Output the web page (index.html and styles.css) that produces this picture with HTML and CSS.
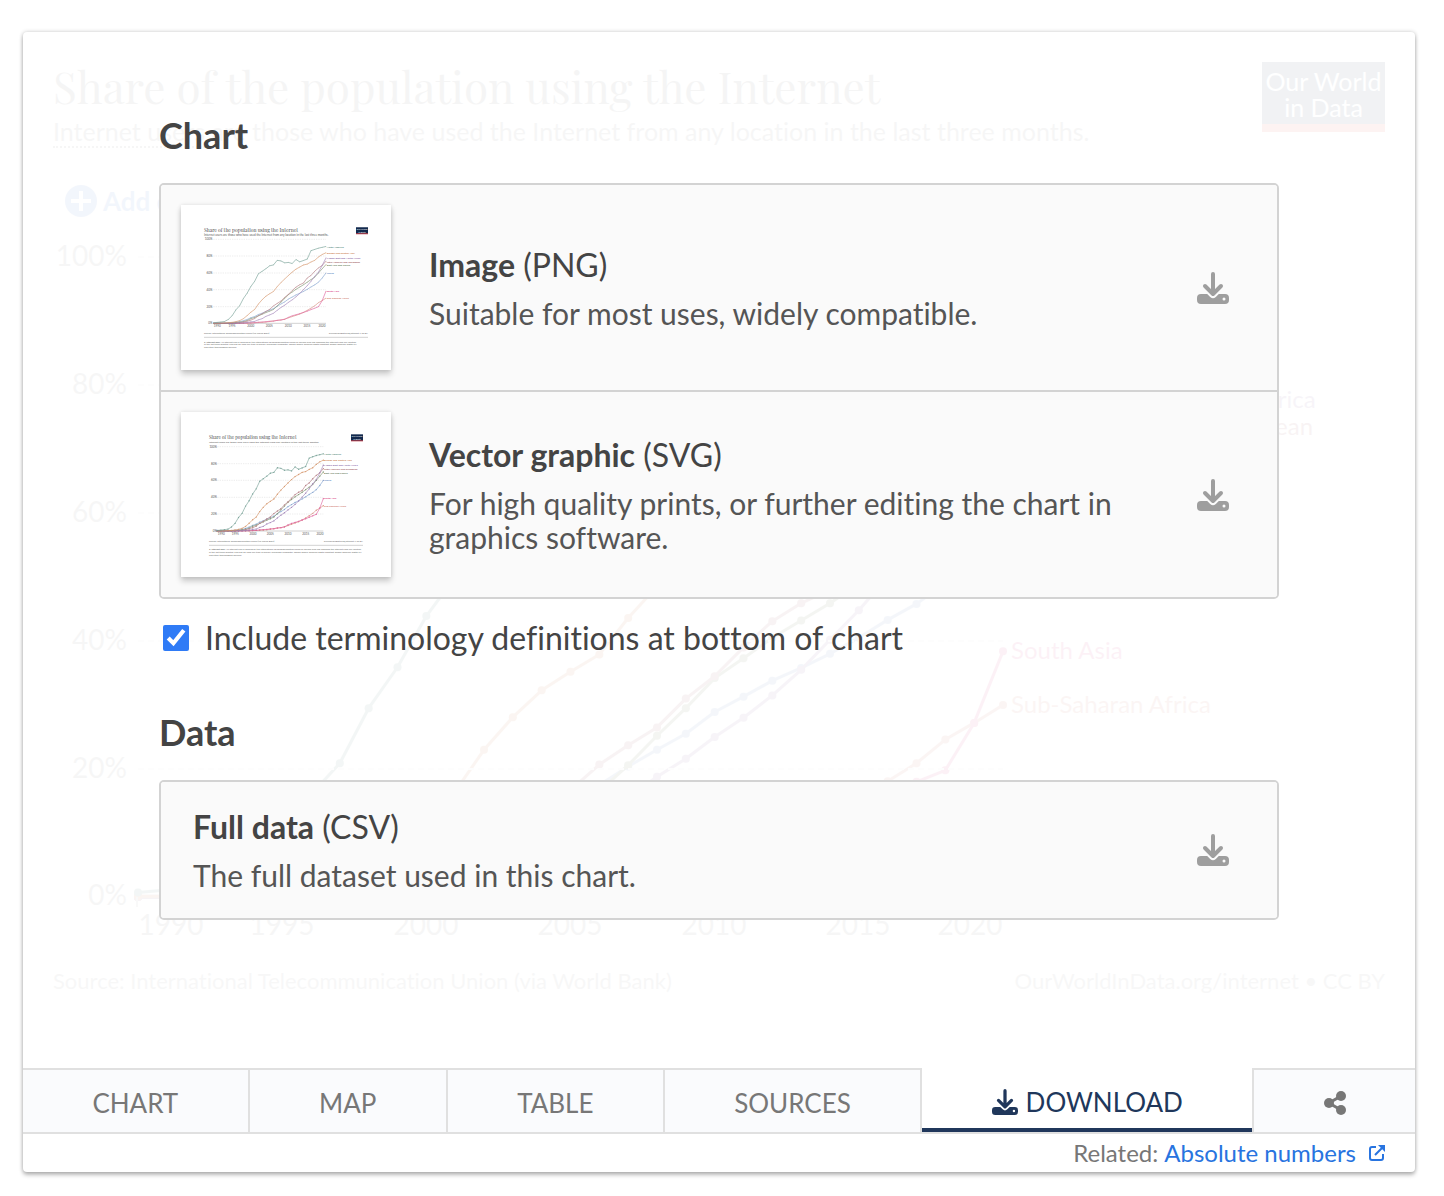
FILE: index.html
```html
<!DOCTYPE html>
<html lang="en">
<head>
<meta charset="utf-8">
<meta name="viewport" content="width=device-width, initial-scale=1">
<title>Share of the population using the Internet</title>
<link rel="stylesheet" href="styles.css">
<script src="chart.js" defer></script>
</head>
<body>
<svg class="defs" aria-hidden="true">
  <symbol id="icon-download" viewBox="0 0 32 32">
    <path d="M16 2V20M8 14l8 8 8-8" fill="none" stroke="currentColor" stroke-width="4" stroke-linecap="round" stroke-linejoin="round"/>
    <path fill="currentColor" fill-rule="evenodd" d="M4 22h6.200l3 3a4 4 0 0 0 5.600 0l3-3H28a4 4 0 0 1 4 4v2a4 4 0 0 1-4 4H4a4 4 0 0 1-4-4v-2a4 4 0 0 1 4-4zM27 25.500a1.500 1.500 0 1 0 0 3 1.500 1.500 0 0 0 0-3z"/>
  </symbol>
</svg>

<main class="grapher">
  <div class="stage">
    <div class="backdrop" aria-hidden="true">
      <header class="chart-header">
        <div>
          <h1 class="chart-title">Share of the population using the Internet</h1>
          <p class="chart-subtitle"><span class="term">Internet users</span> are those who have used the Internet from any location in the last three months.</p>
        </div>
        <div class="logo">Our World<br>in Data</div>
      </header>
      <div class="add-country">
        <svg class="plus" viewBox="0 0 32 32"><circle cx="16" cy="16" r="16" fill="currentColor"/><path d="M16 6v20M6 16h20" stroke="#fff" stroke-width="4"/></svg>
        <span>Add country</span>
      </div>
      <svg class="plot" viewBox="0 0 1332 735">
        <g class="series" data-x="85" data-y="679" data-width="865" data-height="640" data-radius="4"></g>
        <path class="grid" d="M85 39H950M85 167H950M85 295H950M85 423H950M85 551H950"/>
        <path class="tick" d="M84 679v10"/>
        <g class="axis-label axis-y">
          <text x="74" y="48">100%</text><text x="74" y="176">80%</text><text x="74" y="304">60%</text><text x="74" y="432">40%</text><text x="74" y="560">20%</text><text x="74" y="687">0%</text>
        </g>
        <g class="axis-label axis-x">
          <text x="118" y="717">1990</text><text x="229" y="717">1995</text><text x="373" y="717">2000</text><text x="517" y="717">2005</text><text x="661" y="717">2010</text><text x="805" y="717">2015</text><text x="917" y="717">2020</text>
        </g>
        <g class="series-label">
          <text x="958" y="102" fill="#286b5b">North America</text>
          <text x="958" y="150" fill="#be5915">Europe and Central Asia</text>
          <text x="958" y="190" fill="#6d3e91">Middle East and North Africa</text>
          <text x="958" y="217" fill="#883039">Latin America and Caribbean</text>
          <text x="958" y="244" fill="#38551f">East Asia and Pacific</text>
          <text x="958" y="303" fill="#3a6cb4">World</text>
          <text x="958" y="441" fill="#cf0a66">South Asia</text>
          <text x="958" y="495" fill="#c4523e">Sub-Saharan Africa</text>
        </g>
      </svg>
      <footer class="chart-footer">
        <span>Source: International Telecommunication Union (via World Bank)</span>
        <span>OurWorldInData.org/internet • CC BY</span>
      </footer>
    </div>

    <div class="downloads">
      <section>
        <h2 class="heading">Chart</h2>
        <div class="card-group">
          <button class="card" type="button">
            <svg class="thumb" viewBox="0 0 630 495" aria-hidden="true">
              <text class="t-title" x="69" y="81">Share of the population using the Internet</text>
              <text class="t-sub" x="69" y="94">Internet users are those who have used the Internet from any location in the last three months.</text>
              <path class="t-navy" d="M525 67h36v20h-36z"/><path class="t-red" d="M525 85h36v3h-36z"/>
              <text class="t-logo" x="543" y="75">Our World</text><text class="t-logo" x="543" y="83">in Data</text>
              <path class="t-grid" d="M97 103H435M97 153H435M97 204H435M97 254H435M97 305H435"/>
              <path class="t-rule" d="M97 355H435M69 397H561"/>
              <g class="series thin" data-x="97" data-y="355" data-width="338" data-height="252" data-radius="1"></g>
              <g class="t-axis t-end"><text x="94" y="106">100%</text><text x="94" y="156">80%</text><text x="94" y="207">60%</text><text x="94" y="257">40%</text><text x="94" y="308">20%</text><text x="94" y="358">0%</text></g>
              <g class="t-axis t-mid"><text x="109" y="367">1990</text><text x="153" y="367">1995</text><text x="209" y="367">2000</text><text x="265" y="367">2005</text><text x="322" y="367">2010</text><text x="378" y="367">2015</text><text x="423" y="367">2020</text></g>
              <g class="t-label">
                <text x="437" y="128" fill="#286b5b">North America</text><text x="437" y="147" fill="#be5915">Europe and Central Asia</text><text x="437" y="163" fill="#6d3e91">Middle East and North Africa</text><text x="437" y="173" fill="#883039">Latin America and Caribbean</text><text x="437" y="184" fill="#38551f">East Asia and Pacific</text><text x="437" y="208" fill="#3a6cb4">World</text><text x="437" y="262" fill="#cf0a66">South Asia</text><text x="437" y="283" fill="#c4523e">Sub-Saharan Africa</text>
              </g>
              <text class="t-note" x="69" y="388">Source: International Telecommunication Union (via World Bank)</text>
              <text class="t-note t-end" x="561" y="388">OurWorldInData.org/internet • CC BY</text>
              <text class="t-note" x="69" y="413"><tspan class="t-bold">1. Internet user:</tspan> An internet user is defined by the International Telecommunication Union as anyone who has accessed the internet from any location</text>
              <text class="t-note" x="69" y="421">in the last three months. This can be from any type of device, including a computer, mobile phone, personal digital assistant, games machine, digital TV</text>
              <text class="t-note" x="69" y="430">and other technological devices.</text>
            </svg>
            <span class="card-text"><span class="card-title"><strong>Image</strong> (PNG)</span><span class="card-desc">Suitable for most uses, widely compatible.</span></span>
            <svg class="card-icon" aria-hidden="true"><use href="#icon-download"/></svg>
          </button>
          <button class="card" type="button">
            <svg class="thumb" viewBox="0 0 630 495" aria-hidden="true">
              <text class="t-title t-small" x="84" y="81">Share of the population using the Internet</text>
              <text class="t-sub t-small" x="84" y="94">Internet users are those who have used the internet from any location in the last three months.</text>
              <path class="t-navy" d="M510 67h36v20h-36z"/><path class="t-red" d="M510 85h36v3h-36z"/>
              <text class="t-logo" x="528" y="75">Our World</text><text class="t-logo" x="528" y="83">in Data</text>
              <path class="t-grid" d="M109 104H427M109 155H427M109 205H427M109 256H427M109 306H427"/>
              <path class="t-rule" d="M109 357H427M84 400H546"/>
              <g class="series thin" data-x="109" data-y="357" data-width="318" data-height="253" data-radius="2"></g>
              <g class="t-axis t-end"><text x="108" y="107">100%</text><text x="108" y="158">80%</text><text x="108" y="208">60%</text><text x="108" y="259">40%</text><text x="108" y="309">20%</text><text x="108" y="360">0%</text></g>
              <g class="t-axis t-mid"><text x="121" y="369">1990</text><text x="163" y="369">1995</text><text x="216" y="369">2000</text><text x="268" y="369">2005</text><text x="321" y="369">2010</text><text x="374" y="369">2015</text><text x="417" y="369">2020</text></g>
              <g class="t-label">
                <text x="429" y="129" fill="#286b5b">North America</text><text x="429" y="147" fill="#be5915">Europe and Central Asia</text><text x="429" y="163" fill="#6d3e91">Middle East and North Africa</text><text x="429" y="175" fill="#883039">Latin America and Caribbean</text><text x="429" y="186" fill="#38551f">East Asia and Pacific</text><text x="429" y="207" fill="#3a6cb4">World</text><text x="429" y="262" fill="#cf0a66">South Asia</text><text x="429" y="286" fill="#c4523e">Sub-Saharan Africa</text>
              </g>
              <text class="t-note" x="84" y="390">Source: International Telecommunication Union (via World Bank)</text>
              <text class="t-note t-end" x="546" y="390">OurWorldInData.org/internet • CC BY</text>
              <text class="t-note" x="84" y="414"><tspan class="t-bold">1. Internet user:</tspan> An internet user is defined by the International Telecommunication Union as anyone who has accessed the internet from any location</text>
              <text class="t-note" x="84" y="423">in the last three months. This can be from any type of device, including a computer, mobile phone, personal digital assistant, games machine, digital TV</text>
              <text class="t-note" x="84" y="432">and other technological devices.</text>
            </svg>
            <span class="card-text"><span class="card-title"><strong>Vector graphic</strong> (SVG)</span><span class="card-desc">For high quality prints, or further editing the chart in graphics software.</span></span>
            <svg class="card-icon" aria-hidden="true"><use href="#icon-download"/></svg>
          </button>
        </div>
        <label class="option"><input class="checkbox" type="checkbox" checked><span>Include terminology definitions at bottom of chart</span></label>
      </section>
      <section>
        <h2 class="heading">Data</h2>
        <div class="card-group">
          <button class="card card-plain" type="button">
            <span class="card-text"><span class="card-title"><strong>Full data</strong> (CSV)</span><span class="card-desc">The full dataset used in this chart.</span></span>
            <svg class="card-icon" aria-hidden="true"><use href="#icon-download"/></svg>
          </button>
        </div>
      </section>
    </div>
  </div>

  <nav class="tabs">
    <button class="tab" type="button">CHART</button>
    <button class="tab" type="button">MAP</button>
    <button class="tab" type="button">TABLE</button>
    <button class="tab" type="button">SOURCES</button>
    <button class="tab tab-active" type="button"><svg class="tab-icon" aria-hidden="true"><use href="#icon-download"/></svg>DOWNLOAD</button>
    <button class="tab tab-share" type="button" aria-label="Share">
      <svg class="share-icon" viewBox="0 0 22 24" aria-hidden="true"><path d="M17 5L5 12l12 7" fill="none" stroke="currentColor" stroke-width="3"/><circle cx="5" cy="12" r="5" fill="currentColor"/><circle cx="17" cy="5" r="5" fill="currentColor"/><circle cx="17" cy="19" r="5" fill="currentColor"/></svg>
    </button>
  </nav>
  <div class="related">
    <span>Related:</span>
    <a class="related-link" href="#absolute-numbers">Absolute numbers<svg class="external-icon" viewBox="0 0 18 18" aria-hidden="true"><path d="M8 3H4a2 2 0 0 0-2 2v9a2 2 0 0 0 2 2h9a2 2 0 0 0 2-2v-4M7 11l8-8" fill="none" stroke="currentColor" stroke-width="2"/><path d="M10 1h7v7z" fill="currentColor"/></svg></a>
  </div>
</main>
</body>
</html>
```
FILE: styles.css
```css
*, *::before, *::after { box-sizing: border-box; }

body {
  margin: 0;
  background: #fff;
  font-family: Lato, "Liberation Sans", sans-serif;
  font-variant-ligatures: none;
  color: #444;
}

h1, h2, p { margin: 0; }
button { font: inherit; font-variant-ligatures: none; color: inherit; margin: 0; cursor: pointer; }
.defs { display: none; }

.grapher {
  margin: 32px 29px 24px 23px;
  background: #fff;
  border-radius: 4px;
  box-shadow: 0 0 4px rgba(0, 0, 0, 0.2), 0 3px 4px rgba(0, 0, 0, 0.25);
}

/* The chart and the download panel share one grid cell. */
.stage { display: grid; }
.backdrop, .downloads { grid-area: 1 / 1; min-width: 0; }

.backdrop { padding: 30px; opacity: 0.05; }
.chart-header { display: flex; justify-content: space-between; align-items: flex-start; }
.chart-title {
  font-family: "Playfair Display", "Liberation Serif", serif;
  font-size: 44px;
  line-height: 48px;
  font-weight: 400;
  color: #555;
}
.chart-subtitle { margin-top: 3px; font-size: 25px; line-height: 36px; color: #666; }
.term { border-bottom: 2px dotted #666; }
.logo {
  width: 123px;
  padding: 6px 0 4px;
  background: #002147;
  border-bottom: 8px solid #dc2a1c;
  color: #fff;
  font-size: 25px;
  line-height: 26px;
  text-align: center;
}
.add-country {
  display: flex;
  align-items: center;
  gap: 6px;
  margin: 36px 0 0 12px;
  color: #2262cf;
  font-size: 26px;
  line-height: 32px;
  font-weight: 700;
}
.plus { width: 32px; height: 32px; }
.plot { display: block; width: 100%; margin-top: 1px; }
.grid { fill: none; stroke: #ddd; stroke-width: 2; stroke-dasharray: 6 4; }
.tick { stroke: #999; stroke-width: 2; }
.axis-label { font-size: 28px; fill: #666; }
.axis-y { text-anchor: end; }
.axis-x { text-anchor: middle; }
.series-label { font-size: 24px; }
.chart-footer {
  display: flex;
  justify-content: space-between;
  margin-top: 13px;
  font-size: 22px;
  line-height: 30px;
  color: #777;
}

.series { fill: none; stroke-width: 3; stroke-linejoin: round; }
.series.thin { stroke-width: 2; opacity: 0.6; }

.downloads { width: 100%; max-width: 1120px; margin: 0 auto; padding: 81px 0 148px; position: relative; }
.heading { margin-bottom: 26px; font-size: 36px; line-height: 44px; font-weight: 700; }
.card-group { border: 2px solid #d3d3d3; border-radius: 5px; overflow: hidden; }
.card {
  display: flex;
  align-items: center;
  width: 100%;
  padding: 20px 48px 20px 20px;
  border: 0;
  background: #fafafa;
  text-align: left;
}
.card + .card { border-top: 2px solid #d3d3d3; }
.card-plain { padding: 26px 48px 26px 32px; }
.thumb {
  flex: none;
  width: 210px;
  height: 165px;
  margin-right: 38px;
  background: #fff;
  box-shadow: 0 0 4px rgba(0, 0, 0, 0.1), 0 4px 6px rgba(0, 0, 0, 0.2);
}
.card-text { display: flex; flex: 1; flex-direction: column; gap: 12px; min-width: 0; padding-right: 48px; }
.card-title { font-size: 32px; line-height: 38px; }
.card-desc { font-size: 30px; line-height: 34px; color: #555; }
.card-icon { flex: none; width: 32px; height: 32px; color: #9e9e9e; }

.option { display: flex; align-items: center; gap: 16px; margin: 20px 0 53px 4px; font-size: 32px; line-height: 38px; }
.checkbox { flex: none; width: 26px; height: 26px; margin: 0; accent-color: #2f7bf6; }

.t-title { font-family: "Playfair Display", "Liberation Serif", serif; font-size: 15px; fill: #444; }
.t-title.t-small { font-size: 14px; }
.t-sub { font-size: 9px; fill: #555; }
.t-sub.t-small { font-size: 8px; }
.t-navy { fill: #12294d; }
.t-red { fill: #c0404a; }
.t-logo { font-size: 7px; fill: #fff; text-anchor: middle; }
.t-grid { stroke: #e4e4e4; stroke-width: 2; stroke-dasharray: 4 3; }
.t-rule { stroke: #bbb; stroke-width: 2; }
.t-axis { font-size: 9px; fill: #555; }
.t-label { font-size: 8px; }
.t-note { font-size: 7px; fill: #666; }
.t-end { text-anchor: end; }
.t-mid { text-anchor: middle; }
.t-bold { font-weight: 700; }

.tabs { display: flex; border-bottom: 2px solid #e0e0e0; }
.tab {
  display: flex;
  flex: 1 1 auto;
  align-items: center;
  justify-content: center;
  gap: 8px;
  height: 64px;
  padding: 4px 68px 0;
  border: 0 solid #e0e0e0;
  border-width: 2px 2px 0 0;
  background: #fafbfd;
  color: #777;
  font-size: 26px;
  line-height: 32px;
}
.tab-active {
  padding-top: 8px;
  border-width: 0 0 4px;
  border-color: #20375b;
  background: #fff;
  color: #20375b;
}
.tab-share { border-width: 2px 0 0 2px; }
.tab-icon { width: 26px; height: 26px; }
.share-icon { width: 22px; height: 24px; }

.related {
  display: flex;
  justify-content: flex-end;
  gap: 6px;
  padding: 4px 29px 4px;
  font-size: 24px;
  line-height: 30px;
  color: #777;
}
.related-link { display: flex; align-items: center; gap: 12px; color: #2874e0; text-decoration: none; }
.external-icon { width: 18px; height: 18px; }
```
FILE: chart.js
```javascript
// Share of people online by region, 1990 to 2020, in percent.
const SERIES = [
  ["#c4523e", [0, 0, 0, 0, 0, 0.1, 0.1, 0.2, 0.3, 0.4, 0.5, 0.7, 0.9, 1.2, 1.5, 2.1, 2.8, 3.5, 4, 5, 6.5, 8, 9.5, 11, 13, 15.5, 18.1, 20.9, 24.6, 27.2, 30]],
  ["#cf0a66", [0, 0, 0, 0, 0, 0, 0.1, 0.1, 0.2, 0.3, 0.5, 0.7, 1.4, 1.6, 1.9, 2.5, 2.7, 3.6, 4, 4.8, 7.2, 9, 10.2, 11.5, 13, 14.5, 16.3, 18, 19.8, 27.2, 38.4]],
  ["#3a6cb4", [0.1, 0.1, 0.2, 0.3, 0.4, 0.8, 1.3, 2, 3.1, 4.6, 6.7, 8.1, 10.5, 12.1, 14.1, 15.8, 17.5, 20.4, 23, 25.5, 28.9, 31.3, 33.8, 35.8, 38, 40.5, 43.3, 45.8, 49, 54, 60]],
  ["#38551f", [0, 0, 0.1, 0.1, 0.2, 0.4, 0.9, 1.4, 2.1, 3.4, 5.6, 7, 9, 10.8, 12.8, 14.5, 16.5, 20.6, 25.2, 29.5, 34.2, 37.3, 40.5, 43.2, 45.9, 49, 52, 55, 60, 65, 70]],
  ["#883039", [0, 0, 0, 0, 0.1, 0.2, 0.4, 0.8, 1.5, 2.5, 3.9, 5.7, 9, 11.5, 14.2, 16.7, 20.7, 23.7, 26.5, 31, 34.5, 39, 43.1, 45.9, 48, 54, 57, 62, 66, 69, 74]],
  ["#6d3e91", [0, 0, 0, 0, 0, 0.1, 0.1, 0.3, 0.6, 1.1, 1.8, 2.3, 4.2, 5.5, 8.3, 10, 12, 15.5, 18.8, 21.6, 25, 28, 31.5, 35.5, 40.2, 44.8, 50, 56, 61, 69, 78]],
  ["#be5915", [0.1, 0.1, 0.2, 0.4, 0.7, 1.2, 2, 3.2, 5.5, 9.2, 13.3, 16.5, 23, 28.1, 32.3, 35.2, 37.9, 43.6, 48.5, 52.8, 57, 61, 64.5, 67, 69.5, 70.5, 73, 75, 79, 82, 84]],
  ["#286b5b", [0.7, 1.1, 1.6, 2.2, 4.7, 9, 16, 20.9, 29.5, 35.9, 43.9, 50, 59, 62, 65, 68.5, 69.5, 75, 74.3, 72, 72.5, 71.2, 76, 73.2, 74.8, 76.5, 86.5, 88, 89.5, 90.5, 91.5]],
];

function draw(tag, attributes, parent) {
  const node = document.createElementNS("http://www.w3.org/2000/svg", tag);
  for (const [name, value] of Object.entries(attributes)) node.setAttribute(name, value);
  parent.append(node);
}

for (const group of document.querySelectorAll(".series")) {
  const { x, y, width, height, radius } = group.dataset;
  for (const [color, values] of SERIES) {
    const points = values.map((value, i) => [+x + (i * width) / 30, y - (value * height) / 100]);
    draw("polyline", { points: points.join(" "), stroke: color }, group);
    for (const [cx, cy] of points) draw("circle", { cx, cy, r: radius, fill: color }, group);
  }
}
```
